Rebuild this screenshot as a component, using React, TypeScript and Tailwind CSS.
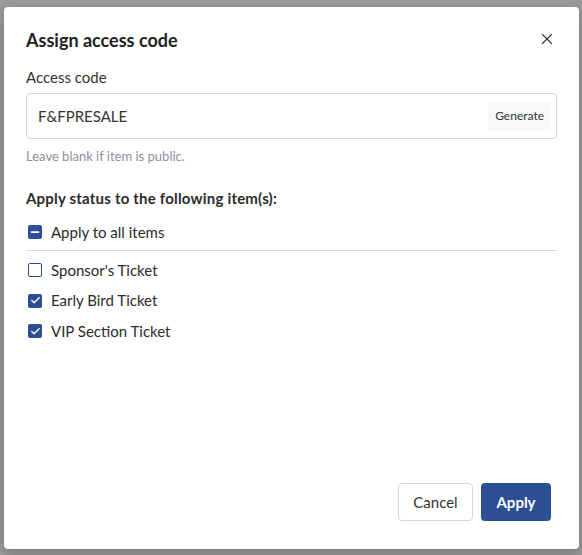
import { useState } from 'react';
import { X, Check, Minus } from 'lucide-react';

type Item = { id: string; name: string; checked: boolean };

const initialItems: Item[] = [
  { id: 'sponsor', name: "Sponsor's Ticket", checked: false },
  { id: 'early', name: 'Early Bird Ticket', checked: true },
  { id: 'vip', name: 'VIP Section Ticket', checked: true },
];

function Box({ state }: { state: 'on' | 'off' | 'some' }) {
  if (state === 'off') {
    return <span className="w-[14px] h-[14px] rounded-[2px] border-[1.5px] border-[#2c4f94] bg-white shrink-0" />;
  }
  return (
    <span className="w-[14px] h-[14px] rounded-[2px] bg-[#2c4f94] flex items-center justify-center shrink-0 text-white">
      {state === 'on' ? <Check className="w-[11px] h-[11px]" strokeWidth={3} /> : <Minus className="w-[12px] h-[12px]" strokeWidth={3.5} />}
    </span>
  );
}

export default function App() {
  const [code, setCode] = useState('F&FPRESALE');
  const [items, setItems] = useState(initialItems);

  const checkedCount = items.filter(i => i.checked).length;
  const allState = checkedCount === 0 ? 'off' : checkedCount === items.length ? 'on' : 'some';

  const toggleAll = () => {
    const next = allState !== 'on';
    setItems(items.map(i => ({ ...i, checked: next })));
  };

  return (
    <div className="h-[555px] w-full bg-[#9b9b9b] pt-[7px] pl-[4px] pr-[3px] font-['Lato','Noto_Sans',sans-serif] text-[#2b2b2b]">
      <div className="h-[542px] bg-white rounded-[4px] shadow-[0_4px_12px_rgba(0,0,0,0.25)] flex flex-col px-[22px] pt-[20px] pb-[28px]">
        {/* Header */}
        <div className="flex items-center justify-between h-[26px]">
          <h1 className="text-[18px] font-bold text-[#222]">Assign access code</h1>
          <button className="text-[#333] -mt-[3px] mr-[1px]">
            <X className="w-[18px] h-[18px]" strokeWidth={1.5} />
          </button>
        </div>

        {/* Access code field */}
        <label className="mt-[14px] text-[15px] leading-[20px] text-[#333]">Access code</label>
        <div className="mt-[6px] h-[46px] border border-[#d6d6d6] rounded-[4px] flex items-center gap-[8px] pr-[5px]">
          <div className="flex-1 min-w-0 pl-[11px]">
            <input
              value={code}
              onChange={e => setCode(e.target.value)}
              className="block w-full outline-none text-[15px] text-[#333] bg-transparent"
            />
          </div>
          <button
            onClick={() => setCode(Math.random().toString(36).slice(2, 10).toUpperCase())}
            className="h-[29px] px-[7px] bg-[#f7f8fa] rounded-[2px] text-[12px] text-[#333]"
          >
            Generate
          </button>
        </div>
        <p className="mt-[9px] text-[13px] leading-[16px] text-[#8a90a0]">Leave blank if item is public.</p>

        {/* Items */}
        <h2 className="mt-[24px] text-[15px] leading-[20px] font-bold tracking-[0.2px] text-[#2b2b2b]">Apply status to the following item(s):</h2>
        <button onClick={toggleAll} className="mt-[14px] flex items-center gap-[9px] pl-[2px] text-[15px] h-[20px]">
          <Box state={allState} />
          <span>Apply to all items</span>
        </button>
        <div className="mt-[8px] border-t border-[#d3d8df]" />
        <div className="mt-[9px] flex flex-col gap-[10.5px]">
          {items.map(item => (
            <button
              key={item.id}
              onClick={() => setItems(items.map(i => (i.id === item.id ? { ...i, checked: !i.checked } : i)))}
              className="flex items-center gap-[9px] pl-[2px] text-[15px] h-[20px]"
            >
              <Box state={item.checked ? 'on' : 'off'} />
              <span>{item.name}</span>
            </button>
          ))}
        </div>

        {/* Footer */}
        <div className="mt-auto flex justify-end gap-[8px] pr-[6px]">
          <button className="h-[38px] w-[75px] border border-[#d6d6d6] rounded-[4px] text-[15px] text-[#333]">Cancel</button>
          <button className="h-[38px] w-[70px] bg-[#2c4f94] rounded-[4px] text-[15px] font-bold text-white">Apply</button>
        </div>
      </div>
    </div>
  );
}
